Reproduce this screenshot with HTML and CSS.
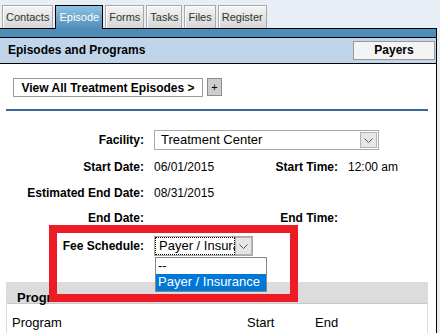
FILE: index.html
```html
<!DOCTYPE html>
<html lang="en">
  <head>
    <meta charset="utf-8">
    <title>Episode</title>
    <link rel="stylesheet" href="styles.css">
  </head>
  <body>
    <!-- Tabs -->
    <div class="tabs">
      <span class="tab">Contacts</span>
      <span class="tab active">Episode</span>
      <span class="tab">Forms</span>
      <span class="tab">Tasks</span>
      <span class="tab">Files</span>
      <span class="tab">Register</span>
    </div>

    <div class="panel">
      <div class="bar"></div>
      <div class="head">
        <h2>Episodes and Programs</h2>
        <button class="payers">Payers</button>
      </div>

      <div class="episodes">
        <button class="view-all">View All Treatment Episodes &gt;</button>
        <button class="add">+</button>
      </div>
      <div class="rule"></div>

      <!-- Episode details -->
      <div class="form">
        <label>Facility:</label>
        <div class="select facility">
          <span class="select-text">Treatment Center</span>
          <span class="arrow"><svg width="9" height="5" viewBox="0 0 9 5"><path d="M0.5 0.5 L4.5 4.5 L8.5 0.5" fill="none" stroke="#555" stroke-width="1"/></svg></span>
        </div>

        <label>Start Date:</label>
        <span class="value">06/01/2015</span>
        <label>Start Time:</label>
        <span class="value">12:00 am</span>

        <label>Estimated End Date:</label>
        <span class="value">08/31/2015</span>
        <span></span>
        <span></span>

        <label>End Date:</label>
        <span></span>
        <label>End Time:</label>
        <span></span>

        <label>Fee Schedule:</label>
        <div class="select fee">
          <span class="select-text focus">Payer / Insurance</span>
          <span class="arrow"><svg width="9" height="5" viewBox="0 0 9 5"><path d="M0.5 0.5 L4.5 4.5 L8.5 0.5" fill="none" stroke="#555" stroke-width="1"/></svg></span>
          <ul class="options">
            <li>--</li>
            <li class="picked">Payer / Insurance</li>
          </ul>
        </div>
      </div>

      <!-- Programs -->
      <div class="programs">
        <div class="programs-head">Programs</div>
        <div class="programs-cols">
          <span>Program</span>
          <span>Start</span>
          <span>End</span>
        </div>
      </div>
    </div>

    <div class="callout"></div>
  </body>
</html>
```

FILE: styles.css
```css
* {
  margin: 0;
  padding: 0;
  box-sizing: border-box;
}

body {
  font-family: "Liberation Sans", Arial, sans-serif;
  font-size: 12px;
  color: #000;
  background: #e8eef6;
  position: relative;
  height: 333px;
  overflow: hidden;
}

/* Tabs */
.tabs {
  display: flex;
  align-items: flex-end;
  gap: 2px;
  height: 28px;
  padding-left: 2px;
}

.tab {
  height: 23px;
  line-height: 22px;
  padding: 0 3px;
  font-size: 11px;
  color: #333;
  border: 1px solid #a8a8a8;
  border-bottom: none;
  background: linear-gradient(#f4f4f4, #d6d6d6);
  box-shadow: inset 1px 1px 0 #fff;
}

.tab.active {
  position: relative;
  z-index: 1;
  height: 24px;
  margin-bottom: -1px;
  color: #fff;
  border-color: #000;
  background: linear-gradient(#8fc0e4, #4f8db7);
  box-shadow: none;
}

/* Panel */
.panel {
  width: 437px;
  height: 305px;
  background: #fff;
  border-right: 1px solid #000;
}

.bar {
  height: 10px;
  background: #4e8db7;
  border-top: 1px solid #000;
  border-bottom: 1px solid #000;
}

.head {
  display: flex;
  justify-content: space-between;
  align-items: center;
  height: 26px;
  padding: 0 1px 1px 8px;
  background: #c0d5e9;
  border-bottom: 1px solid #000;
}

.head h2 {
  font-size: 12px;
  font-weight: bold;
}

.payers {
  width: 82px;
  height: 19px;
  font-family: inherit;
  font-size: 12px;
  font-weight: bold;
  color: #000;
  background: #f4f4f4;
  border: 1px solid #9a9a9a;
}

.episodes {
  display: flex;
  gap: 4px;
  margin: 14px 0 0 13px;
}

.view-all {
  width: 190px;
  height: 19px;
  font-family: inherit;
  font-size: 12px;
  font-weight: bold;
  color: #000;
  background: #fff;
  border: 1px solid #999;
}

.add {
  width: 15px;
  height: 18px;
  font-family: inherit;
  font-size: 11px;
  line-height: 14px;
  color: #000;
  background: #cdcdcd;
  border: 1px solid #8c8c8c;
}

.rule {
  height: 2px;
  margin: 12px 8px 0 6px;
  background: #396797;
}

/* Form */
.form {
  display: grid;
  grid-template-columns: 144px 100px 74px 1fr;
  grid-template-rows: 27px 26px 25px 28px 20px;
  column-gap: 10px;
  margin-top: 19px;
}

.form label {
  font-weight: bold;
  text-align: right;
  line-height: 20px;
}

.form .value {
  line-height: 20px;
}

.select {
  position: relative;
  height: 20px;
  border: 1px solid #a9a9a9;
  background: #fff;
  font-size: 13px;
}

.select-text {
  display: block;
  line-height: 18px;
  padding-left: 6px;
  white-space: nowrap;
  overflow: hidden;
}

.arrow {
  position: absolute;
  display: flex;
  align-items: center;
  justify-content: center;
  width: 17px;
  background: #e6e6e6;
  border: 1px solid #b4b4b4;
}

.facility {
  grid-column: 2 / 5;
  width: 225px;
  height: 20px;
}

.facility .arrow {
  top: 1px;
  right: 1px;
  height: 16px;
}

.fee {
  grid-column: 2 / 5;
  width: 99px;
}

.fee .select-text {
  margin-right: 17px;
  padding-left: 4px;
  outline: 1px dotted #000;
  outline-offset: -1px;
}

.fee .arrow {
  top: 0;
  right: 0;
  height: 18px;
}

.options {
  position: absolute;
  z-index: 2;
  top: 20px;
  left: 0;
  width: 112px;
  list-style: none;
  background: #fff;
  border: 1px solid #828790;
}

.options li {
  height: 16px;
  line-height: 16px;
  padding-left: 2px;
  white-space: nowrap;
}

.options .picked {
  height: 17px;
  color: #fff;
  background: #0078d7;
}

/* Programs */
.programs {
  margin: 26px 8px 0 6px;
  height: 60px;
  border-left: 1px solid #dcdcdc;
  border-right: 1px solid #dcdcdc;
}

.programs-head {
  height: 22px;
  padding: 9px 0 0 10px;
  font-size: 13px;
  line-height: 14px;
  font-weight: bold;
  background: #dcdcdc;
  border-bottom: 1px solid #c8c8c8;
}

.programs-cols {
  display: grid;
  grid-template-columns: 235px 68px 1fr;
  padding: 9px 0 0 5px;
  font-size: 13px;
  line-height: 20px;
}

/* Annotation */
.callout {
  position: absolute;
  z-index: 3;
  left: 49px;
  top: 225px;
  width: 249px;
  height: 77px;
  border: 8px solid #ed1c24;
}
```
